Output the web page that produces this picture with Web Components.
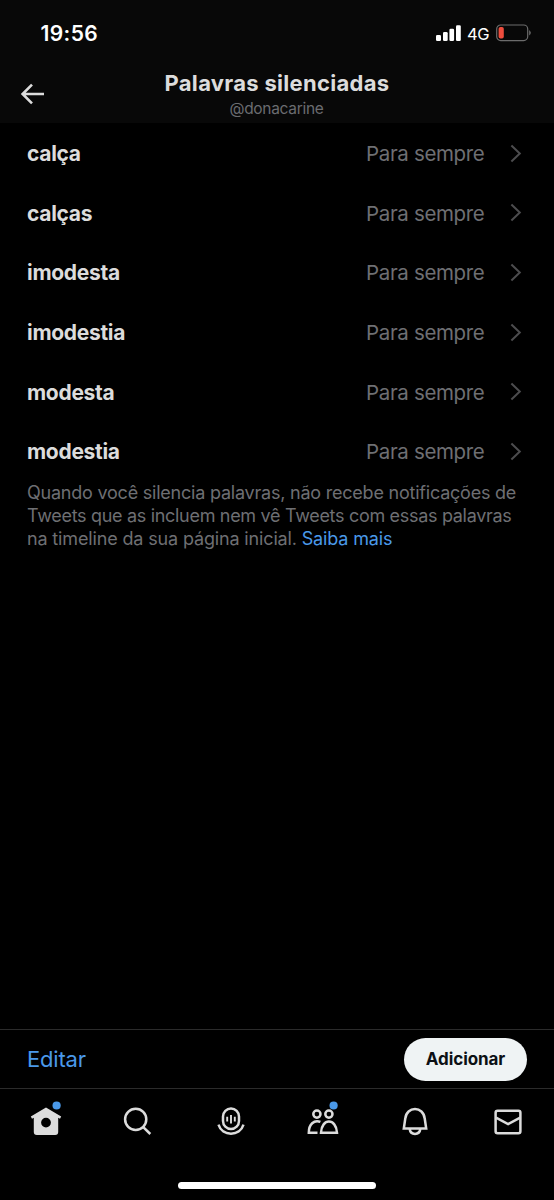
<!DOCTYPE html>
<html lang="pt-BR">
<head>
<meta charset="utf-8">
<title>Palavras silenciadas</title>
<style>
html,body{margin:0;height:100%;background:#000}
body{font-family:Inter,"Liberation Sans",sans-serif;color:#dcdcdc;overflow:hidden}
</style>
</head>
<body>
<muted-words-screen>
  <status-bar slot="top" time="19:56" network="4G"></status-bar>
  <nav-header slot="top" handle="@donacarine">Palavras silenciadas</nav-header>
  <word-row duration="Para sempre">calça</word-row>
  <word-row duration="Para sempre">calças</word-row>
  <word-row duration="Para sempre">imodesta</word-row>
  <word-row duration="Para sempre">imodestia</word-row>
  <word-row duration="Para sempre">modesta</word-row>
  <word-row duration="Para sempre">modestia</word-row>
  <help-note></help-note>
  <action-bar slot="bottom"></action-bar>
  <tab-bar slot="bottom"></tab-bar>
</muted-words-screen>
<script>
function define(name, render) {
  customElements.define(name, class extends HTMLElement {
    connectedCallback() {
      if (this.shadowRoot) return;
      this.attachShadow({ mode: 'open' }).innerHTML = render(this);
    }
  });
}

define('muted-words-screen', () => `
<style>
:host{display:flex;flex-direction:column;height:1200px;background:#000}
.top{background:#080808;height:123px;display:flex;flex-direction:column}
main{flex:1;padding-top:1px}
</style>
<div class="top"><slot name="top"></slot></div>
<main><slot></slot></main>
<slot name="bottom"></slot>`);

define('status-bar', el => `
<style>
:host{display:flex;justify-content:space-between;height:66px;box-sizing:border-box;padding:0 22px 0 40.5px;align-items:center;color:#fff}
.time{font-size:21px;font-weight:600;letter-spacing:.4px}
.right{display:flex;align-items:center}
.net{font-size:16.5px;font-weight:400;margin:1px 7px 0 5.5px;letter-spacing:-.5px}
svg{display:block}
</style>
<span class="time">${el.getAttribute('time')}</span>
<span class="right">
<svg width="26" height="18" viewBox="0 0 26 18" fill="#fff"><rect x="0" y="11" width="5" height="6" rx="1.3"/><rect x="7" y="8" width="4.7" height="9" rx="1.3"/><rect x="13.4" y="4.7" width="4.7" height="12.3" rx="1.3"/><rect x="20" y="1.2" width="4.8" height="15.8" rx="1.3"/></svg>
<span class="net">${el.getAttribute('network')}</span>
<svg width="36" height="18" viewBox="0 0 36 18"><rect x=".7" y="1" width="31" height="15.6" rx="4" fill="none" stroke="#6c6c6c" stroke-width="1.2"/><rect x="2.6" y="3" width="5.2" height="11.6" rx="1.8" fill="#ee4d3d"/><path d="M33.2 6q3.2 2.8 0 5.6z" fill="#6c6c6c"/></svg>
</span>`);

define('nav-header', el => `
<style>
:host{display:grid;grid-template-columns:60px 1fr 60px;height:57px;align-items:center}
.back{padding-left:20px;display:block;margin-top:-2px}
.titles{text-align:center;display:flex;flex-direction:column;align-items:center;margin-top:-1px}
h1{margin:0;font-size:22px;line-height:28px;font-weight:700;white-space:nowrap;letter-spacing:.3px}
small{font-size:15.5px;line-height:20px;color:#6b6c70;letter-spacing:-.3px;margin-top:2px;margin-right:1px}
</style>
<svg class="back" width="26" height="22" viewBox="0 0 26 22" fill="none" stroke="#dcdcdc" stroke-width="2.6"><path d="M24 11H3M12 1.6 2.6 11l9.4 9.4"/></svg>
<div class="titles"><h1><slot></slot></h1><small>${el.getAttribute('handle')}</small></div>`);

define('word-row', el => `
<style>
:host{display:flex;align-items:center;height:59.6px;padding:0 32px 0 27px;font-size:21px}
b{flex:1;font-weight:700;letter-spacing:-.3px}
span{color:#6e6f73;font-size:20.5px;letter-spacing:-.34px}
svg{margin-left:25.5px}
</style>
<b><slot></slot></b><span>${el.getAttribute('duration')}</span>
<svg width="12" height="20" viewBox="0 0 12 20" fill="none" stroke="#4c4c4e" stroke-width="2"><path d="M1.4 1.5 9.8 9.5 1.4 17.5"/></svg>`);

define('help-note', () => `
<style>
:host{display:block;padding:0 27px;margin-top:-.6px;font-size:18px;line-height:23px;color:#6e6f73;white-space:nowrap}
div:nth-of-type(1){letter-spacing:-.22px}
div:nth-of-type(2){letter-spacing:-.31px}
div:nth-of-type(3){letter-spacing:-.15px}
a{color:#4a99e9}
</style>
<div>Quando você silencia palavras, não recebe notificações de</div>
<div>Tweets que as incluem nem vê Tweets com essas palavras</div>
<div>na timeline da sua página inicial. <a>Saiba mais</a></div>`);

define('action-bar', () => `
<style>
:host{display:flex;align-items:center;justify-content:space-between;height:60px;box-sizing:border-box;padding:0 27px;border:solid #2b2b2b;border-width:1px 0}
a{font-size:22px;color:#4a99e9;letter-spacing:-.2px}
button{width:123px;height:43px;border:0;border-radius:22px;background:#eff3f4;color:#0d1014;font:700 17px Inter,"Liberation Sans",sans-serif;letter-spacing:-.08px;padding:0}
</style>
<a>Editar</a><button>Adicionar</button>`);

const dot = '<circle cx="10.6" cy="-14.5" r="4.1" fill="#4a99e9" stroke="none"/>';
const icons = [
  `<path fill="#dcdcdc" stroke="none" fill-rule="evenodd" d="M0-12.5 15.2-3.5 14-1.3 12.2-2.3V12q0 3-3 3H-9.2q-3 0-3-3V-2.3L-14-1.3-15.2-3.5ZM0-2.3A4.9 4.9 0 1 0 0 7.5 4.9 4.9 0 1 0 0-2.3Z"/>${dot}`,
  `<circle cx="-2.3" cy="-.7" r="10.6"/><path d="M5 6.8 12.3 14"/>`,
  `<rect x="-8" y="-11.4" width="16" height="20.4" rx="8"/><path d="M-12.5 4.7C-9 16.6 9 16.6 12.5 4.7"/><path stroke-width="1.9" d="M-3.8-3.3V1.6M0-5V3.4M3.8-3.3V1.6"/>`,
  `<circle cx="-6.1" cy="-5.9" r="3.6"/><circle cx="5.9" cy="-5.9" r="3.6"/><path d="M-2.6 1.9C-9-.6-14.2 4.3-14.2 12.7H-5.5M-2 12.7C-1.4-2.1 13.2-2.1 14 12.7Z"/>${dot}`,
  `<path d="M-11.2 8.6-9.8-1C-8.6-14.3 8.6-14.3 9.8-1L11.2 8.6ZM-5.3 9C-4.5 15.5 4.5 15.5 5.3 9"/>`,
  `<rect x="-12.4" y="-9.2" width="24.8" height="22.4" rx="2"/><path d="M-12-2.3.1 4 12.2-2.3"/>`
];
define('tab-bar', () => `
<style>
:host{display:flex;flex-direction:column;align-items:center;height:111px}
nav{display:grid;grid-template-columns:repeat(6,1fr);width:100%;height:90px;justify-items:center;padding-top:6px;box-sizing:border-box}
i{width:198px;height:7px;border-radius:4px;background:#fff;margin-top:3px}
</style>
<nav>${icons.map(s => `<svg width="60" height="50" viewBox="-30 -25 60 50" fill="none" stroke="#dcdcdc" stroke-width="2.5">${s}</svg>`).join('')}</nav><i></i>`);
</script>
</body>
</html>
